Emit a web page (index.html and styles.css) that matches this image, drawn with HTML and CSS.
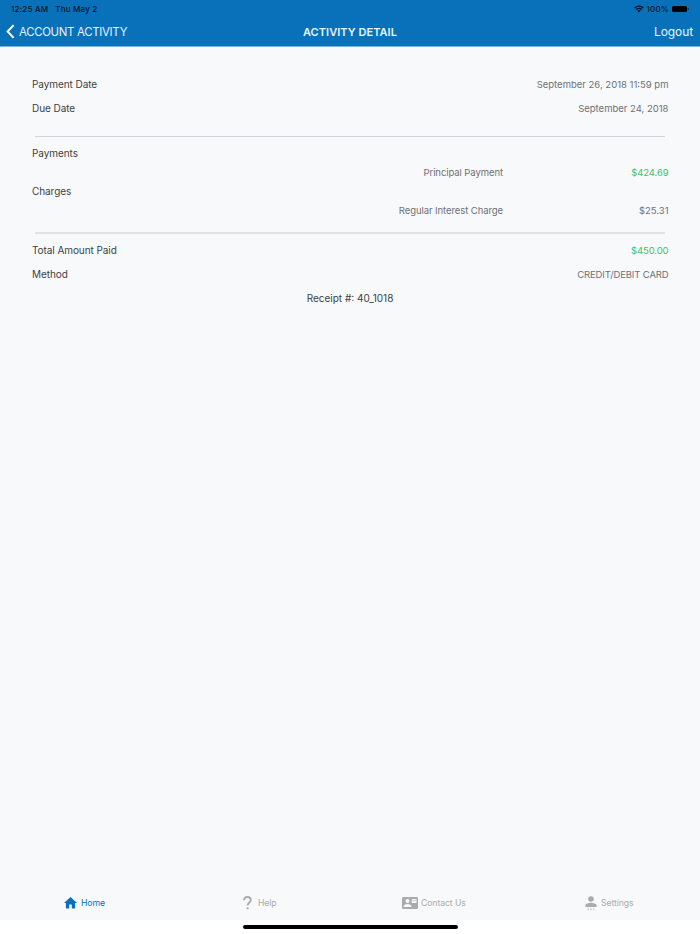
FILE: index.html
```
<!DOCTYPE html>
<html lang="en">
  <head>
    <meta charset="utf-8">
    <meta name="viewport" content="width=device-width, initial-scale=1.0">
    <title>Activity Detail</title>
    <link rel="stylesheet" href="styles.css">
  </head>
  <body>
    <header>
      <div class="status-bar">
        <span class="time">12:25 AM</span>
        <span class="date">Thu May 2</span>
        <svg class="wifi" viewBox="0 0 20 15">
          <path d="M1 5.5a13 13 0 0 1 18 0M4.2 8.7a8.4 8.4 0 0 1 11.6 0" fill="none" stroke="currentColor" stroke-width="2.6"/>
          <path d="M6.5 11a5 5 0 0 1 7 0L10 14.6z" fill="currentColor"/>
        </svg>
        <span class="percent">100%</span>
        <svg class="battery" viewBox="0 0 17 6">
          <rect width="15" height="6" rx="1.6" fill="#000"/>
          <path d="M15.8 2v2.2q1-.3 1-1.1T15.8 2z" fill="#04121e"/>
        </svg>
      </div>
      <nav class="nav-bar">
        <a class="back">
          <svg viewBox="0 0 9 15"><path d="M7.6 1.1L1.6 7.5l6 6.4" fill="none" stroke="currentColor" stroke-width="2"/></svg>
          <span class="back-label">ACCOUNT ACTIVITY</span>
        </a>
        <h1>ACTIVITY DETAIL</h1>
        <a class="logout">Logout</a>
      </nav>
    </header>

    <main>
      <div class="row"><span class="label">Payment Date</span><span class="value">September 26, 2018 11:59 pm</span></div>
      <div class="row"><span class="label">Due Date</span><span class="value">September 24, 2018</span></div>
      <hr>
      <div class="row heading"><span class="label">Payments</span></div>
      <div class="row item"><span class="name">Principal Payment</span><span class="value green">$424.69</span></div>
      <div class="row heading"><span class="label">Charges</span></div>
      <div class="row item"><span class="name">Regular Interest Charge</span><span class="value">$25.31</span></div>
      <hr class="thick">
      <div class="row"><span class="label">Total Amount Paid</span><span class="value green">$450.00</span></div>
      <div class="row"><span class="label">Method</span><span class="value card">CREDIT/DEBIT CARD</span></div>
      <div class="row receipt"><span>Receipt #: 40_1018</span></div>
    </main>

    <footer class="tabs">
      <a class="tab active">
        <svg width="13" height="12" viewBox="0 0 13 12"><path d="M6.5 0L13 6h-1.9v5.6H7.8V7.5H5.2v4.1H1.9V6H0z" fill="currentColor"/></svg>
        <span>Home</span>
      </a>
      <a class="tab help">
        <svg width="9" height="14" viewBox="0 0 9 14"><path d="M1 4.2C1 2.2 2.3 1 4.3 1s3.5 1.2 3.5 3c0 2.4-3.2 2.6-3.2 5.6" fill="none" stroke="currentColor" stroke-width="1.9"/><path d="M3.6 11.3h2v2h-2z" fill="currentColor"/></svg>
        <span>Help</span>
      </a>
      <a class="tab contact">
        <svg width="16" height="12" viewBox="0 0 16 12">
          <rect width="16" height="12" rx="1.2" fill="currentColor"/>
          <circle cx="5.5" cy="3.9" r="2" fill="#f8f9fb"/>
          <path d="M1.6 10V9.3c0-1.5 2.5-2.2 3.9-2.2s3.9.7 3.9 2.2v.7z" fill="#f8f9fb"/>
          <path d="M9.8 2h4.7v4H9.8z" fill="#f8f9fb"/>
          <path d="M10.1 2.6l2.1 1.5 2.1-1.5" fill="none" stroke="currentColor" stroke-width=".7"/>
        </svg>
        <span>Contact Us</span>
      </a>
      <a class="tab settings">
        <svg width="12" height="14" viewBox="0 0 12 14">
          <circle cx="6" cy="3" r="2.8" fill="currentColor"/>
          <path d="M.4 11V9.5C.4 7.7 4.1 6.8 6 6.8s5.6.9 5.6 2.7V11z" fill="currentColor"/>
          <path d="M2.6 12.5h1.2v1.2H2.6zM5.4 12.5h1.2v1.2H5.4zM8.2 12.5h1.2v1.2H8.2z" fill="currentColor"/>
        </svg>
        <span>Settings</span>
      </a>
    </footer>
    <div class="home-area"><div class="home-indicator"></div></div>
  </body>
</html>
```
FILE: styles.css
```
* {
  box-sizing: border-box;
}

body {
  display: flex;
  flex-direction: column;
  height: 934px;
  margin: 0;
  background-color: #f8f9fb;
  color: #3d3f42;
  font-family: Inter, "Liberation Sans", sans-serif;
  font-size: 10px;
}

header {
  height: 47px;
  background-color: #0871ba;
  border-bottom: 1px solid #7fb3da;
}

.status-bar {
  display: flex;
  align-items: center;
  height: 17px;
  padding: 0 11px;
  color: #04121e;
  font-size: 8px;
  font-weight: 500;
  letter-spacing: 0.2px;
}

.date {
  margin-left: 7px;
}

.wifi {
  width: 10px;
  height: 8px;
  margin-left: auto;
  margin-right: 3px;
}

.battery {
  width: 17px;
  height: 6px;
  margin-left: 3px;
}

/* Navigation */
.nav-bar {
  display: grid;
  grid-template-columns: 1fr auto 1fr;
  align-items: center;
  height: 29px;
  padding: 0 7px;
  color: #e8f3fb;
  font-size: 12px;
}

.back {
  display: flex;
  align-items: center;
  margin-left: -1px;
  font-size: 11.4px;
  letter-spacing: -0.3px;
}

.back svg {
  width: 9px;
  height: 15px;
  margin-right: 4px;
  color: #fff;
}

h1 {
  margin: 0;
  font-size: 11px;
  font-weight: 600;
  letter-spacing: 0.05px;
}

.logout {
  text-align: right;
  letter-spacing: -0.1px;
}

/* Payment details */
main {
  flex: 1;
  padding: 25px 32px 0;
}

.row {
  display: flex;
  align-items: center;
  height: 24px;
}

.label {
  letter-spacing: -0.07px;
}

.value {
  margin-left: auto;
  margin-right: -0.5px;
  color: #6e7076;
  font-size: 9.5px;
}

.green {
  color: #48bd69;
  letter-spacing: -0.1px;
}

.card {
  letter-spacing: -0.14px;
}

hr {
  height: 1px;
  margin: 16px 3px 7px;
  border: 0;
  background-color: #d2d4d7;
}

.thick {
  height: 2px;
  margin: 12px 3px 4px;
  background-color: #e0e2e4;
}

.heading {
  height: 18px;
}

.item {
  height: 20px;
}

.name {
  width: 471px;
  color: #6e7076;
  font-size: 9.5px;
  letter-spacing: -0.08px;
  text-align: right;
}

.receipt {
  justify-content: center;
}

/* Bottom tabs */
.tabs {
  display: grid;
  grid-template-columns: repeat(4, 1fr);
  height: 34px;
  color: #a9abad;
}

.tab {
  display: flex;
  align-items: center;
  gap: 4px;
  padding-left: 64px;
  font-size: 8.7px;
  letter-spacing: -0.1px;
}

.active {
  color: #0871ba;
}

.help {
  padding-left: 68px;
  gap: 6px;
}

.contact {
  padding-left: 52px;
  gap: 3px;
}

.settings {
  padding-left: 60px;
}

.home-area {
  display: flex;
  align-items: center;
  justify-content: center;
  height: 14px;
  background-color: #fff;
}

.home-indicator {
  width: 215px;
  height: 4px;
  border-radius: 2px;
  background-color: #000;
}
```
